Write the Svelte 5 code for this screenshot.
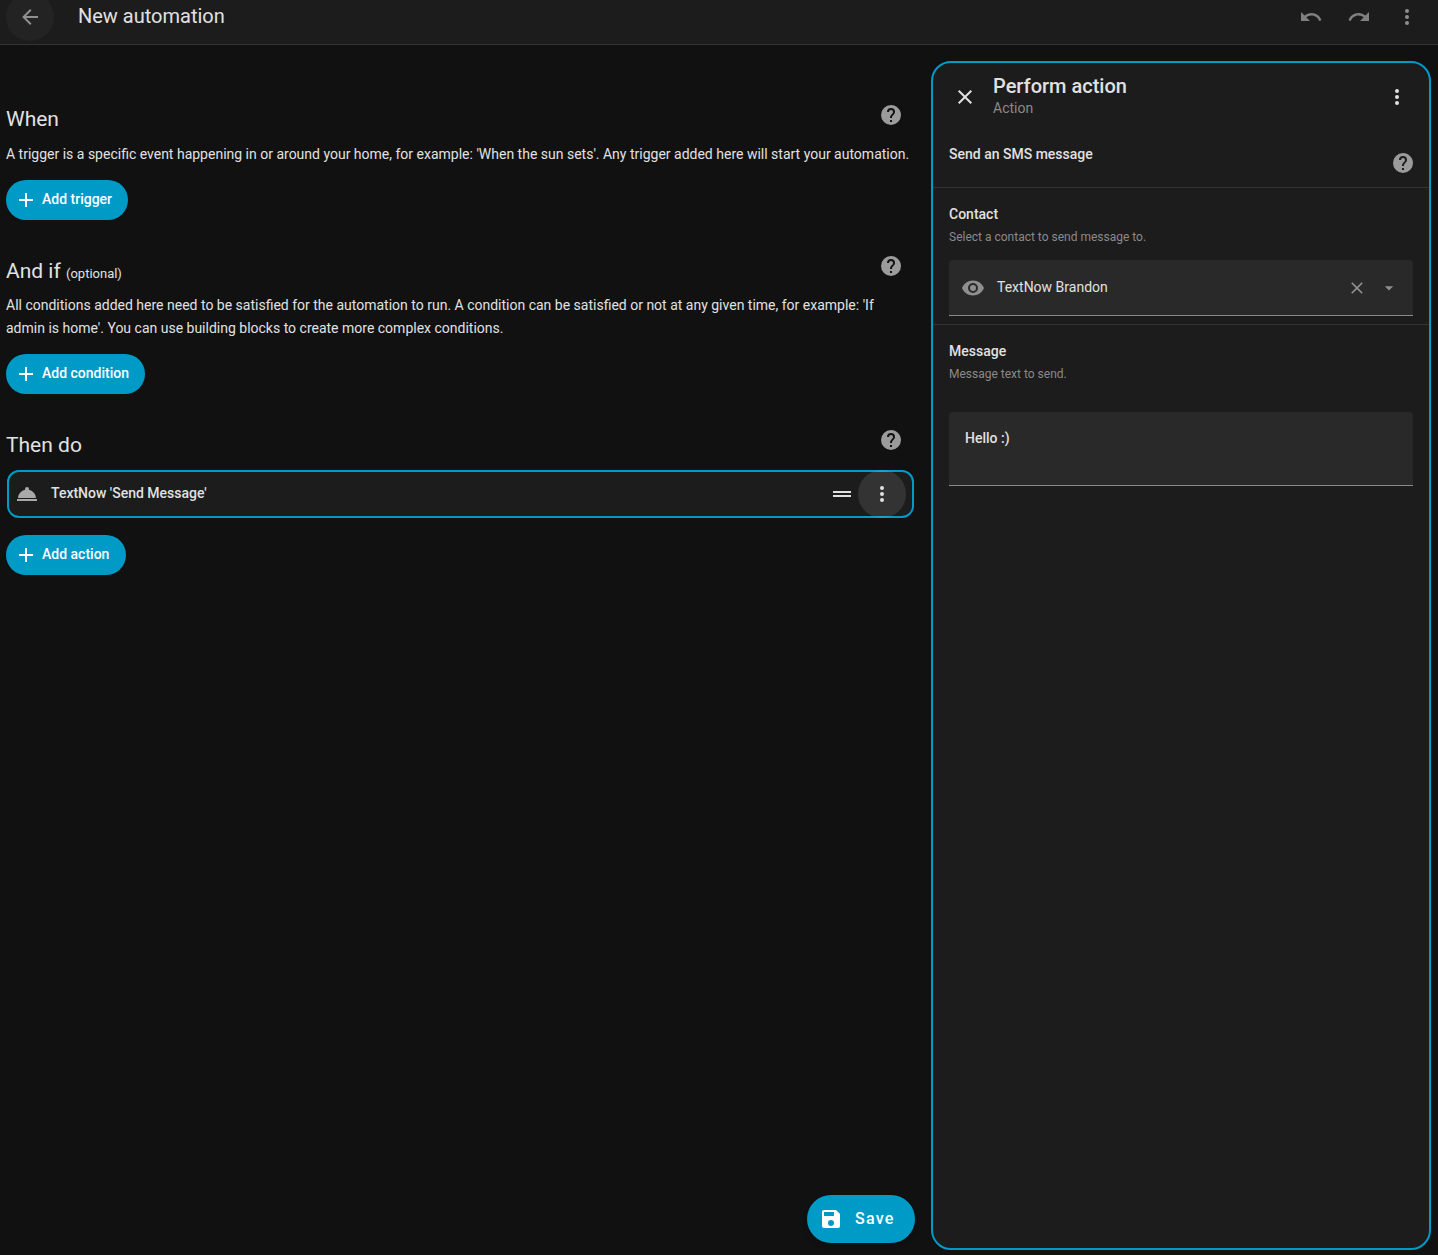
<script>
  const d = {
    back: "M20,11V13H8L13.5,18.5L12.08,19.92L4.16,12L12.08,4.08L13.5,5.5L8,11H20Z",
    undo: "M12.5,8C9.85,8 7.45,9 5.6,10.6L2,7V16H11L7.38,12.38C8.77,11.22 10.54,10.5 12.5,10.5C16.04,10.5 19.05,12.81 20.1,16L22.47,15.22C21.08,11.03 17.15,8 12.5,8Z",
    redo: "M18.4,10.6C16.55,9 14.15,8 11.5,8C6.85,8 2.92,11.03 1.54,15.22L3.9,16C4.95,12.81 7.95,10.5 11.5,10.5C13.45,10.5 15.23,11.22 16.62,12.38L13,16H22V7L18.4,10.6Z",
    dots: "M12,16A2,2 0 0,1 14,18A2,2 0 0,1 12,20A2,2 0 0,1 10,18A2,2 0 0,1 12,16M12,10A2,2 0 0,1 14,12A2,2 0 0,1 12,14A2,2 0 0,1 10,12A2,2 0 0,1 12,10M12,4A2,2 0 0,1 14,6A2,2 0 0,1 12,8A2,2 0 0,1 10,6A2,2 0 0,1 12,4Z",
    help: "M15.07,11.25L14.17,12.17C13.45,12.89 13,13.5 13,15H11V14.5C11,13.39 11.45,12.39 12.17,11.67L13.41,10.41C13.78,10.05 14,9.55 14,9C14,7.89 13.1,7 12,7A2,2 0 0,0 10,9H8A4,4 0 0,1 12,5A4,4 0 0,1 16,9C16,9.88 15.64,10.67 15.07,11.25M13,19H11V17H13M12,2A10,10 0 0,0 2,12A10,10 0 0,0 12,22A10,10 0 0,0 22,12C22,6.47 17.5,2 12,2Z",
    plus: "M19,13H13V19H11V13H5V11H11V5H13V11H19V13Z",
    close: "M19,6.41L17.59,5L12,10.59L6.41,5L5,6.41L10.59,12L5,17.59L6.41,19L12,13.41L17.59,19L19,17.59L13.41,12L19,6.41Z",
    eye: "M12,9A3,3 0 0,0 9,12A3,3 0 0,0 12,15A3,3 0 0,0 15,12A3,3 0 0,0 12,9M12,17A5,5 0 0,1 7,12A5,5 0 0,1 12,7A5,5 0 0,1 17,12A5,5 0 0,1 12,17M12,4.5C7,4.5 2.73,7.61 1,12C2.73,16.39 7,19.5 12,19.5C17,19.5 21.27,16.39 23,12C21.27,7.61 17,4.5 12,4.5Z",
    down: "M7,10L12,15L17,10H7Z",
    save: "M15,9H5V5H15M12,19A3,3 0 0,1 9,16A3,3 0 0,1 12,13A3,3 0 0,1 15,16A3,3 0 0,1 12,19M17,3H5C3.89,3 3,3.9 3,5V19A2,2 0 0,0 5,21H19A2,2 0 0,0 21,19V7L17,3Z",
    bell: "M2,17H22V19H2V17M13.84,7.79C13.94,7.55 14,7.28 14,7A2,2 0 0,0 12,5A2,2 0 0,0 10,7C10,7.28 10.06,7.55 10.16,7.79C6.25,8.6 3.27,11.93 3,16H21C20.73,11.93 17.75,8.6 13.84,7.79Z",
    drag: "M21 11H3V9H21V11M21 13H3V15H21V13Z"
  };
</script>

{#snippet icon(path, cls = "")}
  <svg class={"icon " + cls} viewBox="0 0 24 24" aria-hidden="true"><path d={path} /></svg>
{/snippet}

{#snippet addBtn(label)}
  <button class="add">
    {@render icon(d.plus, "plus")}
    <span>{label}</span>
  </button>
{/snippet}

<div class="page">
  <header class="topbar">
    <div class="back">{@render icon(d.back, "muted")}</div>
    <div class="title">New automation</div>
    <div class="actions">
      {@render icon(d.undo, "dim")}
      {@render icon(d.redo, "dim")}
      {@render icon(d.dots, "muted")}
    </div>
  </header>

  <div class="body">
    <main class="editor">
      <section class="when">
        <div class="head">
          <h2>When</h2>
          {@render icon(d.help, "help")}
        </div>
        <p>A trigger is a specific event happening in or around your home, for example: 'When the sun sets'. Any trigger added here will start your automation.</p>
        {@render addBtn("Add trigger")}
      </section>

      <section class="andif">
        <div class="head">
          <h2>And if <small>(optional)</small></h2>
          {@render icon(d.help, "help")}
        </div>
        <p>All conditions added here need to be satisfied for the automation to run. A condition can be satisfied or not at any given time, for example: 'If admin is home'. You can use building blocks to create more complex conditions.</p>
        {@render addBtn("Add condition")}
      </section>

      <section class="then">
        <div class="head">
          <h2>Then do</h2>
          {@render icon(d.help, "help")}
        </div>
        <div class="row">
          {@render icon(d.bell, "bell")}
          <span class="rowlabel">TextNow 'Send Message'</span>
          {@render icon(d.drag, "drag")}
          <div class="rowmenu">{@render icon(d.dots, "light")}</div>
        </div>
        {@render addBtn("Add action")}
      </section>

      <div class="fabwrap">
        <button class="fab">
          {@render icon(d.save, "saveicon")}
          <span>Save</span>
        </button>
      </div>
    </main>

    <aside class="panel">
      <div class="panelhead">
        {@render icon(d.close, "light closeicon")}
        <div class="ptitle">
          <div class="pname">Perform action</div>
          <div class="psub">Action</div>
        </div>
        {@render icon(d.dots, "light")}
      </div>

      <div class="service">
        <span>Send an SMS message</span>
        {@render icon(d.help, "help")}
      </div>

      <div class="field contact">
        <div class="flabel">Contact</div>
        <div class="fdesc">Select a contact to send message to.</div>
        <div class="select">
          {@render icon(d.eye, "muted eye")}
          <span class="selval">TextNow Brandon</span>
          {@render icon(d.close, "muted clear")}
          {@render icon(d.down, "muted caret")}
        </div>
      </div>

      <div class="field message">
        <div class="flabel">Message</div>
        <div class="fdesc">Message text to send.</div>
        <div class="textarea">Hello :)</div>
      </div>
    </aside>
  </div>
</div>

<style>
  :global(body) {
    margin: 0;
    background: #111111;
  }
  .page {
    width: 1438px;
    height: 1255px;
    overflow: hidden;
    background: #111111;
    color: #e1e1e1;
    font-family: Roboto, "Liberation Sans", sans-serif;
    font-size: 14px;
    display: flex;
    flex-direction: column;
  }
  .icon {
    width: 24px;
    height: 24px;
    flex: none;
    display: block;
    fill: currentColor;
  }
  .icon.muted { color: #8f8f8f; }
  .icon.dim { color: #808080; }
  .icon.light { color: #e1e1e1; }
  .icon.help { color: #9b9b9b; }

  .topbar {
    flex: none;
    background: #1c1c1c;
    border-bottom: 1px solid #333333;
    display: flex;
    align-items: center;
    padding: 0 0 10px 6px;
    box-sizing: border-box;
    height: 45px;
  }
  .back {
    width: 48px;
    height: 48px;
    margin: -7px 0;
    border-radius: 50%;
    background: #232323;
    display: flex;
    align-items: center;
    justify-content: center;
    flex: none;
  }
  .title {
    margin-left: 24px;
    margin-top: -2px;
    font-size: 20px;
    line-height: 24px;
    flex: 1;
  }
  .actions {
    display: flex;
    gap: 24px;
    padding-right: 19px;
  }

  .body {
    flex: 1;
    display: flex;
    min-height: 0;
  }
  .editor {
    width: 914px;
    flex: none;
    padding: 0 0 0 6px;
    box-sizing: border-box;
    display: flex;
    flex-direction: column;
    position: relative;
  }
  section { display: flex; flex-direction: column; align-items: flex-start; }
  .when { padding-top: 58px; }
  .andif { padding-top: 34px; }
  .then { padding-top: 34px; }
  .head {
    width: 100%;
    display: flex;
    justify-content: space-between;
    align-items: center;
    height: 28px;
    padding-right: 11px;
    box-sizing: border-box;
  }
  h2 {
    margin: 6px 0 0;
    font-size: 21px;
    font-weight: 400;
    line-height: 28px;
    color: #e1e1e1;
    white-space: nowrap;
  }
  .when h2 { margin-top: 4px; }
  .andif h2 { margin-top: 8px; }
  h2 small { font-size: 13px; }
  .head .icon { margin-top: -4px; }
  p {
    margin: 12px 0 0;
    font-size: 14px;
    line-height: 23px;
    color: #e1e1e1;
    width: 908px;
  }
  .add {
    margin-top: 14px;
    height: 40px;
    border: 0;
    border-radius: 20px;
    background: #009ac7;
    color: #ffffff;
    font-family: inherit;
    font-size: 14px;
    font-weight: 500;
    display: flex;
    align-items: center;
    gap: 4px;
    padding: 0 16.3px 0 8px;
  }
  .add span { margin-top: -2px; }
  .row {
    margin: 14px 0 0 1px;
    width: 907px;
    height: 48px;
    box-sizing: border-box;
    border: 2px solid #009ac7;
    border-radius: 12px;
    background: #1c1c1c;
    display: flex;
    align-items: center;
    padding-left: 6px;
    padding-right: 54px;
    position: relative;
  }
  .then .add { margin-top: 17px; }
  .icon.bell { color: #a9a9a9; }
  .rowlabel {
    margin-left: 12px;
    flex: 1;
    font-weight: 500;
    margin-top: -2px;
  }
  .icon.drag { color: #e1e1e1; margin-right: 4px; }
  .rowmenu {
    position: absolute;
    top: -2px;
    right: 6px;
    width: 48px;
    height: 48px;
    border-radius: 50%;
    background: rgba(225, 225, 225, 0.12);
    display: flex;
    align-items: center;
    justify-content: center;
  }
  .fabwrap {
    position: absolute;
    right: -1px;
    bottom: 12px;
  }
  .fab {
    height: 48px;
    width: 108px;
    border: 0;
    border-radius: 24px;
    background: #009ac7;
    color: #ffffff;
    font-family: inherit;
    font-size: 16px;
    font-weight: 500;
    letter-spacing: 1.25px;
    display: flex;
    align-items: center;
    padding: 0 0 0 12px;
    gap: 12px;
    box-shadow: 0 3px 5px rgba(0, 0, 0, 0.2);
  }
  .fab span { margin-top: -2px; }

  .panel {
    margin: 16px 7px 5px 17px;
    flex: 1;
    box-sizing: border-box;
    border: 2px solid #009ac7;
    border-radius: 20px;
    background: #1c1c1c;
    display: flex;
    flex-direction: column;
    overflow: hidden;
  }
  .panelhead {
    display: flex;
    align-items: center;
    padding: 9px 20px 0 20px;
    height: 58px;
    box-sizing: border-box;
  }
  .ptitle { flex: 1; margin-left: 16px; margin-top: -2px; }
  .pname { font-size: 20px; font-weight: 500; line-height: 24px; }
  .psub { font-size: 14px; line-height: 20px; color: #8a8a8a; }
  .service {
    height: 67px;
    box-sizing: border-box;
    border-bottom: 1px solid #333333;
    padding: 0 14px 0 16px;
    display: flex;
    justify-content: space-between;
    font-weight: 500;
  }
  .service span { line-height: 20px; margin-top: 23px; }
  .service .icon { margin-top: 30px; }
  .field {
    padding: 0 16px;
    box-sizing: border-box;
  }
  .contact {
    height: 137px;
    border-bottom: 1px solid #333333;
    padding-top: 16px;
  }
  .message { padding-top: 16px; }
  .flabel { font-weight: 500; line-height: 20px; }
  .fdesc { font-size: 12px; line-height: 20px; color: #8a8a8a; margin-top: 3px; }
  .select {
    margin-top: 13px;
    height: 56px;
    box-sizing: border-box;
    background: #292929;
    border-radius: 4px 4px 0 0;
    border-bottom: 1px solid #8a8a8a;
    display: flex;
    align-items: center;
    padding: 0 12px;
  }
  .selval { flex: 1; margin-left: 12px; margin-top: -2px; }
  .icon.eye { margin-top: 1px; }
  .icon.clear { width: 20px; height: 20px; margin-top: 1px; margin-right: 12px; }
  .icon.caret { width: 20px; height: 20px; margin-right: 2px; margin-top: 1px; }
  .textarea {
    margin-top: 28px;
    height: 74px;
    box-sizing: border-box;
    background: #292929;
    border-radius: 4px 4px 0 0;
    border-bottom: 1px solid #8a8a8a;
    padding: 16px 16px 0;
    line-height: 20px;
    font-weight: 500;
  }
</style>
